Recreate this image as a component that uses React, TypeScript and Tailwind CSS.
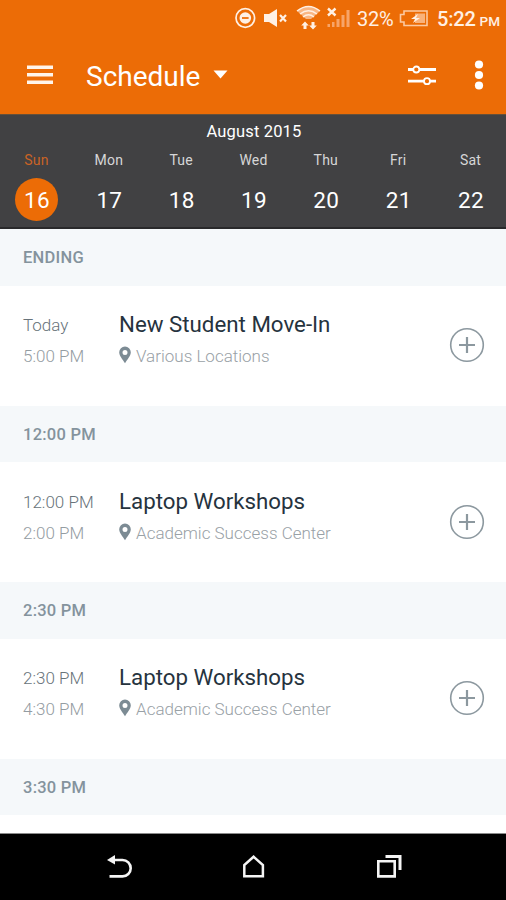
import React, { useState } from "react";

const days = [
  { name: "Sun", date: 16 },
  { name: "Mon", date: 17 },
  { name: "Tue", date: 18 },
  { name: "Wed", date: 19 },
  { name: "Thu", date: 20 },
  { name: "Fri", date: 21 },
  { name: "Sat", date: 22 },
];

const events = [
  {
    section: "ENDING",
    start: "Today",
    end: "5:00 PM",
    title: "New Student Move-In",
    location: "Various Locations",
  },
  {
    section: "12:00 PM",
    start: "12:00 PM",
    end: "2:00 PM",
    title: "Laptop Workshops",
    location: "Academic Success Center",
  },
  {
    section: "2:30 PM",
    start: "2:30 PM",
    end: "4:30 PM",
    title: "Laptop Workshops",
    location: "Academic Success Center",
  },
];

const StatusBar: React.FC = () => (
  <div className="flex h-[37px] items-center text-[#fff0e4]">
    <svg className="ml-[234px] h-[37px] w-[118px] shrink-0" viewBox="234 0 118 37" fill="none">
      <circle cx="245.3" cy="18" r="9.3" stroke="currentColor" strokeWidth="1.7" />
      <circle cx="245.3" cy="18" r="5.8" fill="currentColor" />
      <path d="M242 18h6.6" stroke="#ef6f08" strokeWidth="1.8" />
      <path d="M264 14h5l8-5v18l-8-5h-5z" fill="currentColor" />
      <path d="M280 15l6 6.500M286 15l-6 6.500" stroke="currentColor" strokeWidth="2.200" />
      <path
        d="M297 11q11.500-8.500 23 0l-9 8h-5z"
        fill="#f9b684"
      />
      <path
        d="M297 11q11.500-9 23 0M300 14q8.500-6.500 17 0M303 17q5.500-4.500 11 0"
        stroke="currentColor"
        strokeWidth="1.500"
      />
      <path d="M305 21.500l3.800 4h-2.300v3.500h-3v-3.500h-2.300z" fill="currentColor" />
      <path d="M313 29.500l-3.800-4h2.300v-3.500h3v3.500h2.300z" fill="currentColor" />
      <path d="M328 8.500l7.500 7M335.500 8.500l-7.500 7" stroke="currentColor" strokeWidth="2.400" />
      <path
        d="M327.500 24h2.500v3h-2.500zM332 22h2.500v5h-2.500zM336.500 19h3v8h-3zM341.500 15h3v12h-3zM346.500 10h3v17h-3z"
        fill="#f7a468"
      />
    </svg>
    <span className="mt-px ml-[5px] w-[39px] text-[20px] leading-[38px] tracking-[-0.300px] whitespace-nowrap">
      32%
    </span>
    <svg className="ml-[3px] h-[37px] w-[29px] shrink-0" viewBox="399 0 29 37" fill="none">
      <path d="M404 11h23v14.500h-23v-3.500h-3.500v-7.500h3.500z" stroke="#fbc9a2" strokeWidth="1.600" />
      <path d="M415 13.500h10v9.500h-10z" fill="#f9b27b" />
      <path d="M418 14l-7 5h4l-2 4 7-5h-4z" fill="currentColor" />
    </svg>
    <span className="mt-[2px] ml-[9px] text-[20px] leading-[37px] font-medium tracking-[-0.200px] whitespace-nowrap">
      5:22
    </span>
    <span className="mt-[6px] ml-[4px] text-[13.500px] font-medium">PM</span>
  </div>
);

const AppBar: React.FC = () => (
  <div className="flex h-[77px] items-center pb-px text-white">
    <svg className="ml-[26px] h-[20px] w-[28px]" viewBox="0 0 28 20" fill="#fff4ea">
      <path d="M1 0.500h26v3.500H1zM1 8h26v3.500H1zM1 15.500h26v3.500H1z" />
    </svg>
    <h1 className="mt-[3px] ml-[32px] w-[116px] text-[28px] leading-[36px] whitespace-nowrap">Schedule</h1>
    <svg className="mb-[2px] ml-[11px] h-[9px] w-[15px]" viewBox="0 0 15 9" fill="currentColor">
      <path d="M0.500 0.500h14l-7 8z" />
    </svg>
    <button className="ml-auto">
      <svg className="h-[24px] w-[30px]" viewBox="0 0 30 24" fill="none" stroke="currentColor">
        <path d="M1 6.500h5.500M12 6.500h17M1 18.200h16M23 18.200h6" strokeWidth="2.800" />
        <circle cx="9.300" cy="6.500" r="3" strokeWidth="1.800" />
        <circle cx="20" cy="18.200" r="3" strokeWidth="1.800" />
      </svg>
    </button>
    <button className="mr-[22px] ml-[37px]">
      <svg className="h-[32px] w-[10px]" viewBox="0 0 10 32" fill="currentColor">
        <circle cx="5" cy="5.500" r="4.100" />
        <circle cx="5" cy="16" r="4.100" />
        <circle cx="5" cy="26.500" r="4.100" />
      </svg>
    </button>
  </div>
);

const SectionHeader: React.FC<{ label: string }> = ({ label }) => (
  <h2 className="h-[56.500px] bg-[#f5f8fa] pl-[23px] text-[16.500px] leading-[58px] font-medium tracking-[0.250px] text-[#84939d]">
    {label}
  </h2>
);

const App: React.FC = () => {
  const [selected, setSelected] = useState(16);

  return (
    <div className="flex h-[900px] w-[506px] flex-col overflow-hidden bg-white font-['Roboto',sans-serif]">
      <header className="shrink-0 bg-[#ec6c06]">
        <StatusBar />
        <AppBar />
      </header>

      <div className="h-[115px] shrink-0 border-t border-b-2 border-t-[#655039] border-b-[#29292b] bg-[#414143] text-white">
        <div className="mt-[7px] ml-[2px] text-center text-[16.500px] leading-[20px] tracking-[0.150px]">
          August 2015
        </div>
        <div className="mt-[8px] flex justify-between pr-[14px] pl-[15px]">
          {days.map((day) => (
            <button
              key={day.date}
              onClick={() => setSelected(day.date)}
              className="flex w-[43px] flex-col items-center"
            >
              <span
                className={`text-[14px] leading-[20px] tracking-[0.200px] ${
                  selected === day.date ? "text-[#ca6325]" : "text-[#d6d6d7]"
                }`}
              >
                {day.name}
              </span>
              <span
                className={`mt-[8px] h-[43px] w-[43px] rounded-full pl-px text-[22.500px] leading-[45px] tracking-[0.300px] ${
                  selected === day.date ? "bg-[#ec6c06]" : ""
                }`}
              >
                {day.date}
              </span>
            </button>
          ))}
        </div>
      </div>

      <main className="min-h-0 flex-1 overflow-hidden">
        {events.map((event) => (
          <section key={event.section} className="h-[176.500px]">
            <SectionHeader label={event.section} />
            <div className="flex pt-[24.500px]">
              <div className="ml-[23px] w-[96px] text-[17px] leading-[31px] font-light">
                <div className="text-[#68737a]">{event.start}</div>
                <div className="text-[#949ca2]">{event.end}</div>
              </div>
              <div className="flex-1">
                <div className="text-[22.300px] leading-[28px] text-[#26333e]">
                  {event.title}
                </div>
                <div className="mt-[3px] flex items-center text-[17px] leading-[31px] font-light text-[#99a1a6]">
                  <svg className="mr-[5px] mb-[3px] h-[18px] w-[12px]" viewBox="0 0 12 18" fill="#7c8b94">
                    <path
                      fillRule="evenodd"
                      d="M6 0.500a5.800 5.800 0 0 1 5.800 5.800c0 3.500-3.300 7-5.800 11-2.500-4-5.800-7.500-5.800-11A5.800 5.800 0 0 1 6 0.500zM6 4a2.500 2.500 0 1 0 0 5 2.500 2.500 0 0 0 0-5z"
                    />
                  </svg>
                  {event.location}
                </div>
              </div>
              <button className="mt-[17px] mr-[21px] h-[36px] w-[36px]">
                <svg viewBox="0 0 36 36" fill="none" stroke="#8c989f">
                  <circle cx="18" cy="18" r="16.300" strokeWidth="1.600" />
                  <path d="M18 10v16M10 18h16" strokeWidth="2.200" />
                </svg>
              </button>
            </div>
          </section>
        ))}
        <SectionHeader label="3:30 PM" />
      </main>

      <nav className="h-[67px] shrink-0 border-t border-[#8a8a8a] bg-black">
        <svg className="h-[66px] w-[506px]" viewBox="0 834 506 66" fill="none" stroke="#f5f5f5">
          <path d="M112 860h10.500a8.200 8.200 0 0 1 0 16.400H109.500" strokeWidth="2.600" />
          <path d="M107 860l8-5v9.500z" fill="#f5f5f5" stroke="none" />
          <path d="M244.300 876.200V865l9.300-8.300 9.300 8.300v11.200z" strokeWidth="2.500" />
          <path d="M378.300 861.200h16.400v15.200h-16.400z" strokeWidth="2.600" />
          <path d="M385.500 856.500h14.500V870" strokeWidth="3" />
        </svg>
      </nav>
    </div>
  );
};

export default App;
